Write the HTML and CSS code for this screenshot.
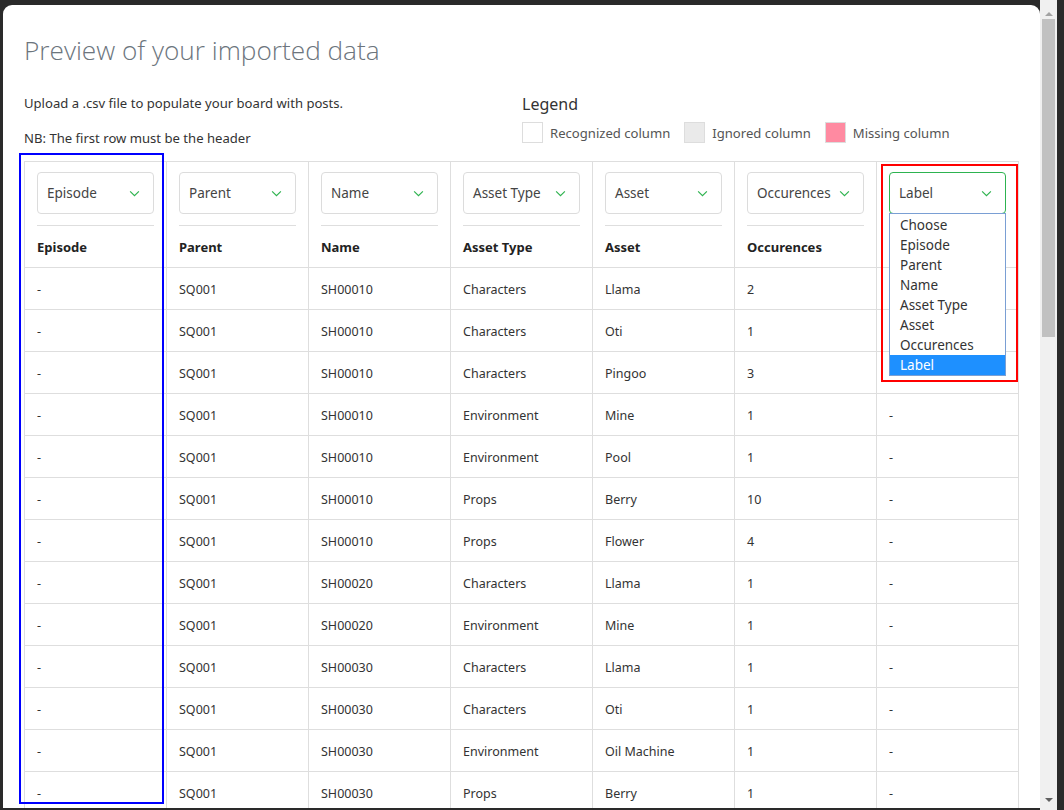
FILE: index.html
```html
<!DOCTYPE html>
<html lang="en">
<head>
<meta charset="utf-8">
<title>Preview of your imported data</title>
<link rel="stylesheet" href="styles.css">
</head>
<body>
<div class="screen">
  <div class="modal-area">
    <div class="modal">
      <h1 class="title">Preview of your imported data</h1>
      <div class="intro">
        <div class="intro-text">
          <p>Upload a .csv file to populate your board with posts.</p>
          <p>NB: The first row must be the header</p>
        </div>
        <div class="legend">
          <div class="legend-title">Legend</div>
          <div class="legend-items">
            <span class="swatch swatch-ok"></span><span class="legend-label">Recognized column</span>
            <span class="swatch swatch-ignored"></span><span class="legend-label">Ignored column</span>
            <span class="swatch swatch-missing"></span><span class="legend-label">Missing column</span>
          </div>
        </div>
      </div>

      <table class="data">
        <thead>
          <tr>
            <th><div class="select"><span>Episode</span><svg class="chev" viewBox="0 0 12 8"><path d="M1 1.5l5 5 5-5"/></svg></div><div class="col-name">Episode</div></th>
            <th><div class="select"><span>Parent</span><svg class="chev" viewBox="0 0 12 8"><path d="M1 1.5l5 5 5-5"/></svg></div><div class="col-name">Parent</div></th>
            <th><div class="select"><span>Name</span><svg class="chev" viewBox="0 0 12 8"><path d="M1 1.5l5 5 5-5"/></svg></div><div class="col-name">Name</div></th>
            <th><div class="select"><span>Asset Type</span><svg class="chev" viewBox="0 0 12 8"><path d="M1 1.5l5 5 5-5"/></svg></div><div class="col-name">Asset Type</div></th>
            <th><div class="select"><span>Asset</span><svg class="chev" viewBox="0 0 12 8"><path d="M1 1.5l5 5 5-5"/></svg></div><div class="col-name">Asset</div></th>
            <th><div class="select"><span>Occurences</span><svg class="chev" viewBox="0 0 12 8"><path d="M1 1.5l5 5 5-5"/></svg></div><div class="col-name">Occurences</div></th>
            <th>
              <div class="select-wrap">
                <div class="select select-open"><span>Label</span><svg class="chev" viewBox="0 0 12 8"><path d="M1 1.5l5 5 5-5"/></svg></div>
                <ul class="options">
                  <li>Choose</li>
                  <li>Episode</li>
                  <li>Parent</li>
                  <li>Name</li>
                  <li>Asset Type</li>
                  <li>Asset</li>
                  <li>Occurences</li>
                  <li class="selected">Label</li>
                </ul>
              </div>
              <div class="col-name">Label</div>
            </th>
          </tr>
        </thead>
        <tbody>
          <tr><td>-</td><td>SQ001</td><td>SH00010</td><td>Characters</td><td>Llama</td><td>2</td><td>-</td></tr>
          <tr><td>-</td><td>SQ001</td><td>SH00010</td><td>Characters</td><td>Oti</td><td>1</td><td>-</td></tr>
          <tr><td>-</td><td>SQ001</td><td>SH00010</td><td>Characters</td><td>Pingoo</td><td>3</td><td>-</td></tr>
          <tr><td>-</td><td>SQ001</td><td>SH00010</td><td>Environment</td><td>Mine</td><td>1</td><td>-</td></tr>
          <tr><td>-</td><td>SQ001</td><td>SH00010</td><td>Environment</td><td>Pool</td><td>1</td><td>-</td></tr>
          <tr><td>-</td><td>SQ001</td><td>SH00010</td><td>Props</td><td>Berry</td><td>10</td><td>-</td></tr>
          <tr><td>-</td><td>SQ001</td><td>SH00010</td><td>Props</td><td>Flower</td><td>4</td><td>-</td></tr>
          <tr><td>-</td><td>SQ001</td><td>SH00020</td><td>Characters</td><td>Llama</td><td>1</td><td>-</td></tr>
          <tr><td>-</td><td>SQ001</td><td>SH00020</td><td>Environment</td><td>Mine</td><td>1</td><td>-</td></tr>
          <tr><td>-</td><td>SQ001</td><td>SH00030</td><td>Characters</td><td>Llama</td><td>1</td><td>-</td></tr>
          <tr><td>-</td><td>SQ001</td><td>SH00030</td><td>Characters</td><td>Oti</td><td>1</td><td>-</td></tr>
          <tr><td>-</td><td>SQ001</td><td>SH00030</td><td>Environment</td><td>Oil Machine</td><td>1</td><td>-</td></tr>
          <tr><td>-</td><td>SQ001</td><td>SH00030</td><td>Props</td><td>Berry</td><td>1</td><td>-</td></tr>
        </tbody>
      </table>

      <div class="mark mark-blue"></div>
      <div class="mark mark-red"></div>
    </div>
  </div>
  <div class="scrollbar">
    <span class="arrow arrow-up"></span>
    <div class="thumb"></div>
    <span class="arrow arrow-down"></span>
  </div>
  <div class="edge"></div>
</div>
</body>
</html>
```

FILE: styles.css
```css
* { box-sizing: border-box; }

html, body {
  margin: 0;
  padding: 0;
  height: 810px;
  overflow: hidden;
  background: #2a2a2a;
  font-family: "Noto Sans", "Open Sans", sans-serif;
  color: #333;
}

.screen {
  display: flex;
  height: 810px;
}

.modal-area {
  flex: 1;
  padding: 5px 0 2px 3px;
  overflow: hidden;
}

.modal {
  position: relative;
  background: #fff;
  height: 100%;
  border-radius: 9px 9px 0 0;
  padding: 28px 0 0 21px;
  overflow: hidden;
}

.title {
  margin: 0;
  font-family: "Open Sans", "Noto Sans", sans-serif;
  font-weight: 300;
  font-size: 26.2px;
  line-height: 34px;
  color: #6c757d;
}

.intro {
  display: grid;
  grid-template-columns: 498px 497px;
  margin-top: 26px;
  height: 68px;
}

.intro-text p {
  margin: 0 0 15px 0;
  font-size: 13.1px;
  line-height: 20px;
  color: #333;
}

.legend-title {
  font-size: 16px;
  line-height: 22px;
  color: #333;
}

.legend-items {
  display: flex;
  align-items: center;
  margin-top: 7px;
  font-size: 13.1px;
  color: #555;
}

.swatch {
  width: 21px;
  height: 21px;
  border: 1px solid #ddd;
  margin-right: 7px;
}
.swatch-ok { background: #fff; }
.swatch-ignored { background: #eaeaea; }
.swatch-missing { background: #ff8aa1; }

.legend-label { margin-right: 14px; }

.data {
  border-collapse: collapse;
  table-layout: fixed;
  width: 995px;
}

.data th, .data td {
  width: 142px;
  border: 1px solid #dedede;
  text-align: left;
  font-size: 12.5px;
  color: #333;
}

.data th {
  padding: 10px 12px 0;
  vertical-align: top;
}

.data td {
  height: 42px;
  padding: 1px 12px 0;
}

.select-wrap { position: relative; }

.select {
  height: 42px;
  border: 1px solid #dcdcdc;
  border-radius: 4px;
  display: flex;
  align-items: center;
  justify-content: space-between;
  padding: 0 13px 0 9px;
  font-weight: 400;
  font-size: 13.5px;
  color: #444;
  margin-bottom: 11px;
}

.select-open {
  border-color: #2db350;
}

.chev {
  width: 11px;
  height: 7px;
  fill: none;
  stroke: #2eb34f;
  stroke-width: 1.3;
}

.col-name {
  border-top: 1px solid #dedede;
  height: 42px;
  padding-top: 1px;
  line-height: 41px;
  font-weight: 700;
  font-size: 13px;
  color: #222;
}

.options {
  position: absolute;
  top: 41px;
  left: 0;
  right: 0;
  margin: 0;
  padding: 1px 0 0;
  list-style: none;
  background: #fff;
  border: 1px solid #7a9fd4;
  z-index: 2;
}

.options li {
  height: 20px;
  line-height: 20px;
  padding-left: 10px;
  font-weight: 400;
  font-size: 13.5px;
  color: #333;
}

.options li.selected {
  background: #1e90ff;
  color: #fff;
}

.mark {
  position: absolute;
  pointer-events: none;
  z-index: 3;
}

.mark-blue {
  left: 16px;
  top: 148px;
  width: 145px;
  height: 651px;
  border: 2px solid #0000ff;
}

.mark-red {
  left: 878px;
  top: 159px;
  width: 137px;
  height: 218px;
  border: 2px solid #ff0000;
}

.scrollbar {
  position: relative;
  width: 17px;
  background: #f0f0f0;
  display: flex;
  flex-direction: column;
  align-items: center;
}

.thumb {
  width: 13px;
  height: 318px;
  margin-top: 3px;
  background: #c1c1c1;
}

.arrow {
  width: 0;
  height: 0;
  border-left: 4px solid transparent;
  border-right: 4px solid transparent;
}

.arrow-up {
  margin-top: 12px;
  border-bottom: 4px solid #a3a3a3;
}

.arrow-down {
  position: absolute;
  bottom: 8px;
  border-top: 4px solid #606060;
}

.edge {
  width: 7px;
  background: #2a2a2a;
}
```
